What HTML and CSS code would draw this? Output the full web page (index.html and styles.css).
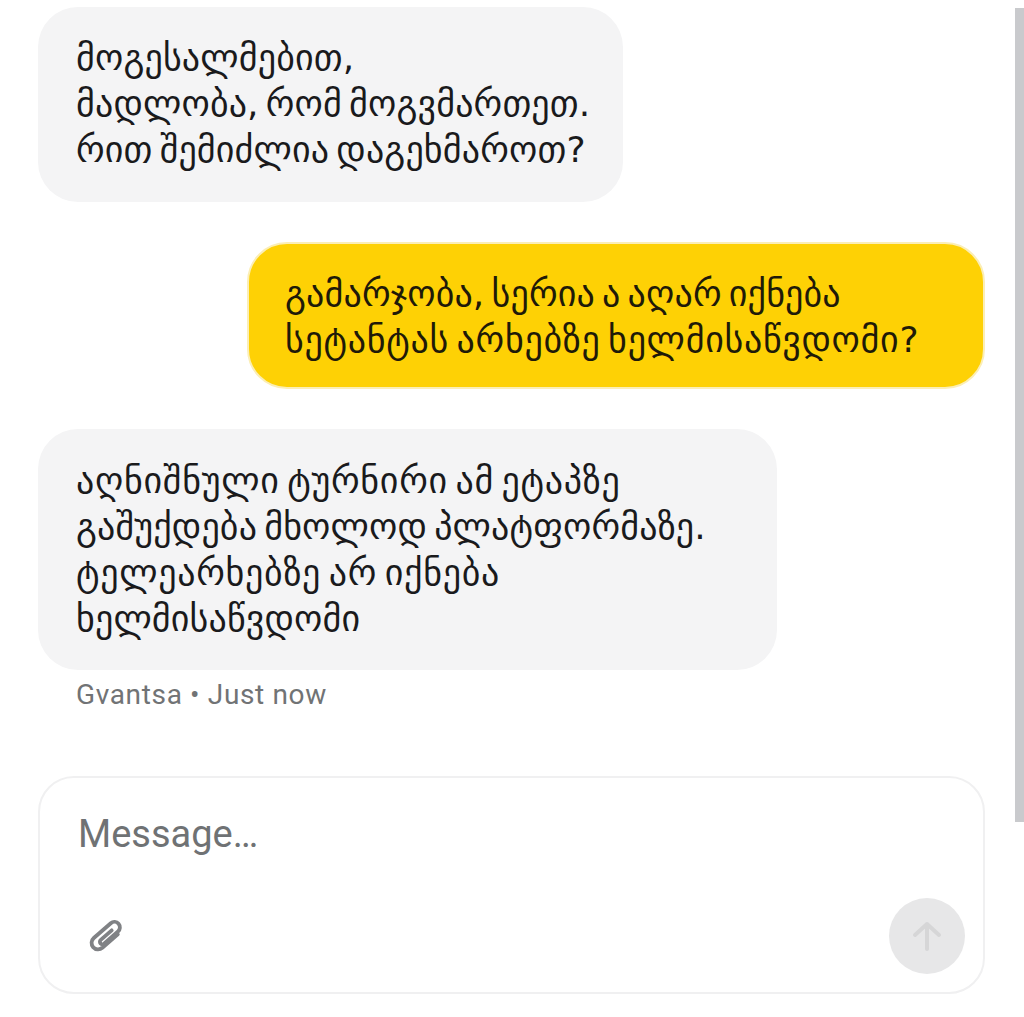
FILE: index.html
```html
<!DOCTYPE html>
<html lang="ka">
<head>
<meta charset="utf-8">
<title>Chat</title>
<link rel="stylesheet" href="styles.css">
</head>
<body>
<main class="chat">
  <section class="thread">
    <div class="bubble agent first">მოგესალმებით,<br>მადლობა, რომ მოგვმართეთ.<br>რით შემიძლია დაგეხმაროთ?</div>
    <div class="bubble user">გამარჯობა, სერია ა აღარ იქნება<br><span class="wide">სეტანტას არხებზე ხელმისაწვდომი?</span></div>
    <div class="group">
      <div class="bubble agent last"><span class="wide">აღნიშნული ტურნირი ამ ეტაპზე</span><br>გაშუქდება მხოლოდ პლატფორმაზე.<br><span class="wide">ტელეარხებზე არ იქნება</span><br>ხელმისაწვდომი</div>
      <div class="meta">Gvantsa • Just now</div>
    </div>
  </section>
  <section class="composer">
    <div class="placeholder">Message…</div>
    <div class="actions">
      <svg class="clip" width="38" height="38" viewBox="0 0 38 38" fill="none" stroke="#808285" stroke-width="3.800" stroke-linecap="round" stroke-linejoin="round">
        <path transform="rotate(-41 19 19)" d="M29 25.500H8.500a6.500 6.500 0 0 1 0-13H31a5.500 5.500 0 0 1 0 11H12.500a2.500 2.500 0 0 1 0-5H27"/>
      </svg>
      <div class="send">
        <svg width="30" height="32" viewBox="0 0 30 32" fill="none" stroke="#d6d6d7" stroke-width="4" stroke-linecap="round" stroke-linejoin="round">
          <path d="M15 29V4M3 15 15 4l12 11"/>
        </svg>
      </div>
    </div>
  </section>
</main>
<div class="scrollbar"></div>
</body>
</html>
```
FILE: styles.css
```css
* { box-sizing: border-box; }
html, body { margin: 0; height: 100%; background: #fff; overflow: hidden; }
body { font-family: Roboto, "DejaVu Sans", sans-serif; }
.chat { width: 1024px; height: 1017px; padding: 7px 39px 0 38px; display: flex; flex-direction: column; }
.thread { display: flex; flex-direction: column; gap: 40px; }
.bubble {
  font-family: "DejaVu Sans", sans-serif;
  font-size: 36px;
  letter-spacing: .15px;
  word-spacing: -4.500px;
  line-height: 46px;
  color: #1a1a1c;
  border-radius: 40px;
  white-space: nowrap;
}
.wide { letter-spacing: .7px; }
.agent { background: #f4f4f5; padding: 28px 38px; }
.first { width: 585px; height: 195px; }
.last { width: 739px; height: 241px; padding-top: 29px; }
.user {
  align-self: flex-end;
  width: 738px;
  height: 147px;
  padding: 27px 36px;
  background: #fed105;
  border: 2px solid #fbeeb6;
  color: #1f1a08;
}
.meta { margin-top: 9px; padding-left: 38px; font-size: 28px; letter-spacing: .65px; line-height: 32px; color: #717375; }
.composer {
  margin-top: 65px;
  height: 218px;
  padding: 33px 18px 18px 38px;
  border: 2px solid #f0f0f1;
  border-radius: 36px;
  display: flex;
  flex-direction: column;
  justify-content: space-between;
}
.placeholder { font-size: 38px; line-height: 46px; color: #6f7274; }
.actions { display: flex; justify-content: space-between; align-items: center; }
.clip { margin-left: 9px; }
.send { width: 76px; height: 76px; border-radius: 50%; background: #e7e7e8; display: flex; align-items: center; justify-content: center; }
.scrollbar { position: absolute; top: 8px; right: 0; width: 9px; height: 814px; background: #c9cacd; }
```
